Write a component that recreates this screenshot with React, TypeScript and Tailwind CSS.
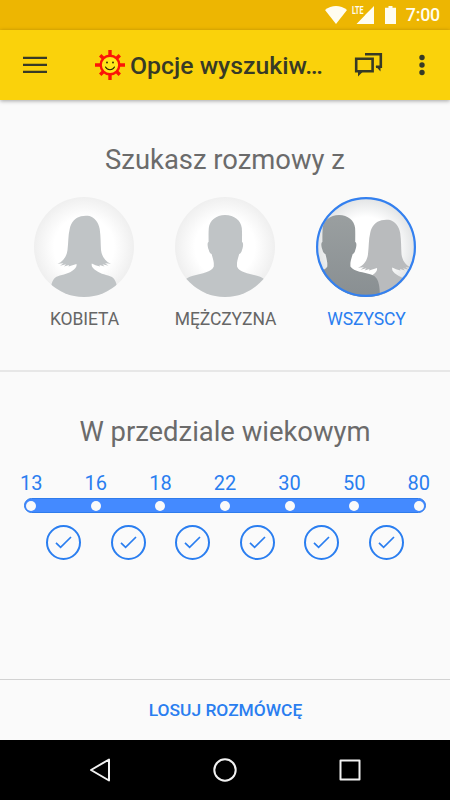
type Who = 'woman' | 'man' | 'both'

const people: { who: Who; label: string }[] = [
  { who: 'woman', label: 'KOBIETA' },
  { who: 'man', label: 'MĘŻCZYZNA' },
  { who: 'both', label: 'WSZYSCY' },
]

const ages = [13, 16, 18, 22, 30, 50, 80]

const WOMAN =
  'M47 19.2C50 18.5 53 18.500 55.500 19C60.500 20.500 64.500 25 65.700 32C66.800 40 66.600 47 67 53C67.600 59 71 64.500 77 66.800L71 66.200L74.500 68.700L68.500 67.300L70.500 69.400L65.500 68L66 69.500L61.500 68.200L57.800 66.500C57 69.500 59 71.500 62 73.500C67 77.500 73 77.500 78 80C81 82 82.500 86 83 90L83 100H17L17 90C17.500 86 19 82 22 80C27 77.500 33 77.500 38 74C41.500 71.500 43 69.500 42.500 67L38.500 68.300L34.500 69.500L35 68L30 69.400L32 67.300L26 68.700L29.500 66.200L23.500 66.800C29.500 64.500 32.900 59 33.500 53C34.500 45 34 39 35.700 32C37 25 41.500 20.500 47 19.200Z'

const MAN =
  'M50 18C59.500 18 65.800 23.500 66.800 31C67.200 36 67 40 67 45C68.600 45.500 68.300 50 67 53C66.500 55 65.800 56.500 64.200 57C63.400 60 62.300 63 62 66V69.500C64 75 73 76.500 81 78.500C85 79.500 87 80.500 89 82V100H11V82C13 80.500 15 79.500 19 78.500C27 76.500 36.500 75 38.800 69.500V66C38.500 63 37.400 60 36.600 57C35 56.500 34.300 55 33.800 53C32.500 50 32 45.500 33.600 45C33.600 40 33.400 36 33.800 31C34.800 23.500 41 18 50 18Z'

// same head as MAN, moved left, with the near shoulder rounded off
const MAN_FRONT =
  'M23 18C32 18 38.300 23.500 39.100 31C39.400 36 39.200 40 39.200 45C41 45.500 40.600 50 39.300 53C38.800 55 38.200 56.500 36.700 57C35.900 60 34.800 63 34.400 66V69.500C38 75 48 75 55 77.500C61 79.500 64 84 64 100H-10V76C0 75 9 74 11.300 69.500V66C11 63 10.200 60 9.400 57C7.800 56.500 7 55 6.500 53C5.200 50 4.700 45.500 6.400 45C6.400 40 6.300 36 6.700 31C7.700 23.500 14 18 23 18Z'

export default function App() {
  return (
    <div className="flex h-[800px] w-[450px] flex-col overflow-hidden bg-[#fafafa] font-['Roboto',sans-serif]">
      <StatusBar />
      <Toolbar />

      <main className="flex flex-1 flex-col">
        <section className="h-[272px] border-b-2 border-[#e7e7e7] pt-[43px]">
          <Heading>Szukasz rozmowy z</Heading>
          <div className="mt-[20px] flex justify-center gap-[41px]">
            {people.map(({ who, label }) => (
              <button key={who} className="flex w-[100px] flex-col items-center">
                <Avatar who={who} />
                <span
                  className={`mt-[10px] pl-[1px] text-[17.500px] leading-6 tracking-[-0.1px] whitespace-nowrap ${
                    who === 'both' ? 'text-[#2a7ef0]' : 'text-[#666666]'
                  }`}
                >
                  {label}
                </span>
              </button>
            ))}
          </div>
        </section>

        <section className="pt-[43px]">
          <Heading>W przedziale wiekowym</Heading>
          <AgeRange />
        </section>
      </main>

      <footer className="flex h-[61px] items-center justify-center border-t border-[#d2d2d2] pl-[1px]">
        <button className="text-[17.400px] font-medium text-[#2a7ef0]">LOSUJ ROZMÓWCĘ</button>
      </footer>
      <NavBar />
    </div>
  )
}

function StatusBar() {
  return (
    <div className="flex h-[30px] items-center justify-end bg-[#edb602] pr-[10px] text-[#fffdf0]">
      <svg className="h-[18px] w-[22px]" viewBox="0 0 22 18" fill="currentColor">
        <path d="M0 4C6.500-1.300 15.500-1.300 22 4L11 18Z" />
      </svg>
      <svg className="ml-[5px] h-[18px] w-[22px] overflow-visible" viewBox="0 0 22 18" fill="currentColor">
        <text x="0" y="7.800" fontSize="10.500" fontWeight="700" textLength="11.500" lengthAdjust="spacingAndGlyphs">
          LTE
        </text>
        <path d="M22 0V18H4.500L13 9.300V9Z" />
      </svg>
      <svg className="ml-[11px] h-[18px] w-[11px]" viewBox="0 0 11 18" fill="currentColor">
        <path d="M3.500 0H7.500V1.800H11V18H0V1.800H3.500Z" />
      </svg>
      <span className="ml-[10px] text-[17.800px] leading-[32px] font-medium tracking-[-0.2px]">7:00</span>
    </div>
  )
}

function Toolbar() {
  return (
    <header className="z-10 flex h-[70px] items-center bg-[#fad20b] pl-[23px] text-[#373a26] shadow-[0_1px_4px_rgba(0,0,0,0.35)]">
      <svg className="h-[18px] w-[24px]" viewBox="0 0 24 18" fill="currentColor">
        <path d="M0 .8H24V3H0ZM0 7.800H24V10H0ZM0 14.800H24V17H0Z" />
      </svg>
      <Sun />
      <h1 className="mt-[1px] ml-[5px] w-[196px] text-[24.800px] leading-8 font-medium whitespace-nowrap">
        Opcje wyszukiw…
      </h1>
      <svg
        className="ml-[28px] h-[26px] w-[30px]"
        viewBox="0 0 30 26"
        fill="none"
        stroke="currentColor"
        strokeWidth="2.600"
      >
        <path d="M2.200 6.700H18.600V19.300H2.200Z" />
        <path d="M4 19.500H9L4 24.500Z" fill="currentColor" stroke="none" />
        <path d="M11 2.200H26.800V14.800H22" />
        <path d="M21.500 14H26.500V19.500Z" fill="currentColor" stroke="none" />
      </svg>
      <svg className="ml-[35px] h-[22px] w-[6px] shrink-0" viewBox="0 0 6 22" fill="currentColor">
        <circle cx="3" cy="3.500" r="2.700" />
        <circle cx="3" cy="11" r="2.700" />
        <circle cx="3" cy="18.500" r="2.700" />
      </svg>
    </header>
  )
}

function Sun() {
  return (
    <svg className="ml-[48px] h-[30px] w-[30px]" viewBox="0 0 30 30">
      <g stroke="#fb1408" strokeWidth="3.400">
        <path d="M15 0V30M0 15H30M5.200 5.200L24.800 24.800M24.800 5.200L5.200 24.800" />
      </g>
      <circle cx="15" cy="15" r="9.300" fill="#ffe51a" stroke="#fb1408" strokeWidth="2.400" />
      <circle cx="12" cy="12.500" r="0.900" fill="#2b2200" />
      <circle cx="18" cy="12.500" r="0.900" fill="#2b2200" />
      <path d="M10.500 17C12.500 20.600 17.500 20.600 19.500 17" fill="none" stroke="#2b2200" strokeWidth="1.100" strokeLinecap="round" />
    </svg>
  )
}

function Heading({ children }: { children: string }) {
  return <h2 className="text-center text-[27.400px] leading-[34px] text-[#6b6b6b]">{children}</h2>
}

function Avatar({ who }: { who: Who }) {
  return (
    <svg className="size-[100px]" viewBox="0 0 100 100">
      <defs>
        <clipPath id={`clip-${who}`}>
          <circle cx="50" cy="50" r="50" />
        </clipPath>
        <radialGradient id={`back-${who}`}>
          <stop offset="0.600" stopColor="#ffffff" />
          <stop offset="1" stopColor={who === 'both' ? '#e0e2e3' : '#efefef'} />
        </radialGradient>
        <linearGradient id={`dark-${who}`} x1="0" y1="0" x2="0" y2="1">
          <stop offset="0" stopColor="#9a9fa0" />
          <stop offset="1" stopColor="#898f92" />
        </linearGradient>
      </defs>
      <g clipPath={`url(#clip-${who})`}>
        <rect width="100" height="100" fill={`url(#back-${who})`} />
        {who === 'woman' && <path d={WOMAN} fill="#c0c4c6" />}
        {who === 'man' && <path d={MAN} fill="#c0c4c6" />}
        {who === 'both' && (
          <>
            <path d={WOMAN} fill="#b9bbbd" transform="translate(18.500 4)" />
            <path d={MAN_FRONT} fill={`url(#dark-${who})`} />
          </>
        )}
      </g>
      {who === 'both' && (
        <circle cx="50" cy="50" r="48.900" fill="none" stroke="#3380f0" strokeWidth="2.200" />
      )}
    </svg>
  )
}

function AgeRange() {
  return (
    <div className="mt-[22px] flex flex-col items-center">
      <div className="flex w-[452px] shrink-0 justify-center text-[20px] leading-[24px] text-[#2a7ef0]">
        {ages.map((age) => (
          <span key={age} className="w-[64.600px] shrink-0 text-center">
            {age}
          </span>
        ))}
      </div>
      <div className="mt-[3px] flex h-[15px] w-[402px] items-center justify-between rounded-full border border-[#2f7cec] bg-[#448aff] px-[1px]">
        {ages.map((age) => (
          <span key={age} className="size-[10px] rounded-full bg-[#fafafa]" />
        ))}
      </div>
      <div className="mt-[12px] flex gap-[29.600px]">
        {ages.slice(1).map((age) => (
          <span
            key={age}
            className="flex size-[35px] items-center justify-center rounded-full border-2 border-[#2a7ef0] text-[#2a7ef0]"
          >
            <svg className="h-[13px] w-[17px]" viewBox="0 0 17 13" fill="none" stroke="currentColor" strokeWidth="1.700">
              <path d="M1 6.800L5.600 11.400L16 1" />
            </svg>
          </span>
        ))}
      </div>
    </div>
  )
}

function NavBar() {
  return (
    <nav className="flex h-[60px] items-center justify-center gap-[101px] bg-black text-[#f2f2f2]">
      <svg className="size-[24px]" viewBox="0 0 24 24" fill="none" stroke="currentColor" strokeWidth="2" strokeLinejoin="round">
        <path d="M21 1.500V22.500L3 12Z" />
      </svg>
      <svg className="size-[24px]" viewBox="0 0 24 24" fill="none" stroke="currentColor" strokeWidth="2">
        <circle cx="12" cy="12" r="10.700" />
      </svg>
      <svg className="size-[24px]" viewBox="0 0 24 24" fill="none" stroke="currentColor" strokeWidth="2" strokeLinejoin="round">
        <rect x="2.500" y="2.500" width="19" height="19" />
      </svg>
    </nav>
  )
}
